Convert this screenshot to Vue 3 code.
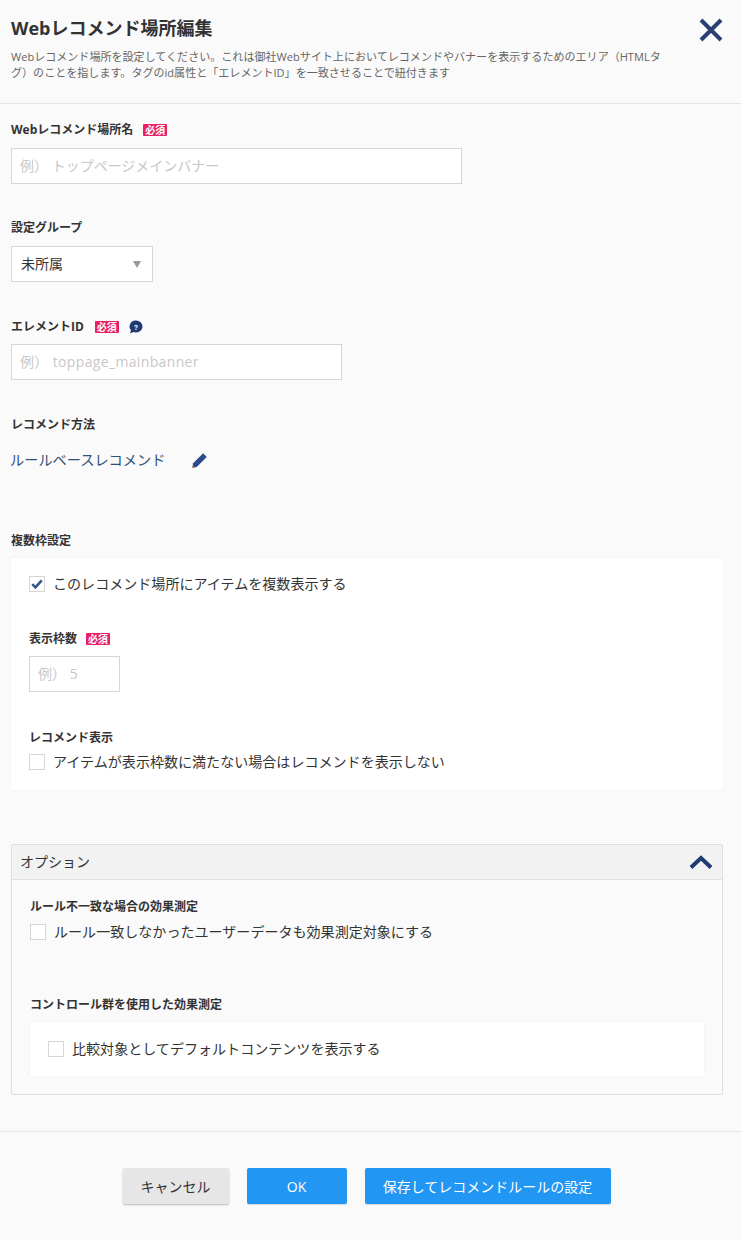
<script setup>
const badge = '必須'
</script>

<template>
  <div class="page">
    <header class="head">
      <div class="head-text">
        <h1 class="title">Webレコメンド場所編集</h1>
        <p class="desc">Webレコメンド場所を設定してください。これは御社Webサイト上においてレコメンドやバナーを表示するためのエリア（HTMLタグ）のことを指します。タグのid属性と「エレメントID」を一致させることで紐付きます</p>
      </div>
      <svg class="close" viewBox="0 0 24 24" width="24" height="24">
        <path d="M2 2 L22 22 M22 2 L2 22" stroke="#2a3f73" stroke-width="4" fill="none" />
      </svg>
    </header>

    <main class="body">
      <section class="field f1">
        <div class="label">Webレコメンド場所名<span class="req r1">{{ badge }}</span></div>
        <div class="input w451"><span class="ph">例） トップページメインバナー</span></div>
      </section>

      <section class="field f2">
        <div class="label">設定グループ</div>
        <div class="input select"><span>未所属</span><i class="tri"></i></div>
      </section>

      <section class="field f3">
        <div class="label">エレメントID<span class="req r2">{{ badge }}</span>
          <svg class="help" viewBox="0 0 16 16" width="16" height="16">
            <path d="M8 1.5a6.5 6 0 0 1 0 12c-1 0-1.9-.2-2.6-.5L2 14.5l1-3.2A6 6 0 0 1 8 1.5z" fill="#1f3a75" />
            <text x="8" y="10.6" text-anchor="middle" font-size="8" font-weight="700" fill="#fff" font-family="Roboto, sans-serif">?</text>
          </svg>
        </div>
        <div class="input w331 tight"><span class="ph wide">例） toppage_mainbanner</span></div>
      </section>

      <section class="field f4">
        <div class="label">レコメンド方法</div>
        <div class="method">
          <span>ルールベースレコメンド</span>
          <svg class="pencil" viewBox="0 0 16 16" width="17" height="17">
            <path d="M11.4 1.2 14.8 4.6 5.4 14 1.2 15 2 10.6z" fill="#2a4a8a" />
            <path d="M1.2 15 1.7 12.6 3.6 14.5z" fill="#d8843a" />
          </svg>
        </div>
      </section>

      <section class="field f5">
        <div class="label">複数枠設定</div>
        <div class="card">
          <label class="check">
            <span class="box">
              <svg viewBox="0 0 16 16" width="16" height="16"><path d="M2.6 8.2 6.2 11.8 13.4 3.8" stroke="#2f5a8c" stroke-width="3" fill="none" /></svg>
            </span>
            このレコメンド場所にアイテムを複数表示する
          </label>
          <div class="label sub1">表示枠数<span class="req">{{ badge }}</span></div>
          <div class="input w91 tight"><span class="ph">例） 5</span></div>
          <div class="label sub2">レコメンド表示</div>
          <label class="check c2"><span class="box"></span>アイテムが表示枠数に満たない場合はレコメンドを表示しない</label>
        </div>
      </section>

      <section class="accordion">
        <div class="acc-head">
          <span class="acc-title">オプション</span>
          <svg viewBox="0 0 24 14" width="24" height="14">
            <path d="M2 12.5 12 3 22 12.5" stroke="#203a72" stroke-width="4" fill="none" />
          </svg>
        </div>
        <div class="acc-body">
          <div class="label">ルール不一致な場合の効果測定</div>
          <label class="check a1"><span class="box"></span>ルール一致しなかったユーザーデータも効果測定対象にする</label>
          <div class="label a2">コントロール群を使用した効果測定</div>
          <div class="inner">
            <label class="check"><span class="box"></span>比較対象としてデフォルトコンテンツを表示する</label>
          </div>
        </div>
      </section>
    </main>

    <footer class="foot">
      <button class="btn cancel">キャンセル</button>
      <button class="btn ok">OK</button>
      <button class="btn save">保存してレコメンドルールの設定</button>
    </footer>
  </div>
</template>

<style>
html, body { margin: 0; background: #fafafa; }
</style>

<style scoped>
.page {
  width: 741px;
  height: 1240px;
  background: #fafafa;
  color: #333;
  font-family: "Open Sans", "Noto Sans CJK JP", sans-serif;
  overflow: hidden;
}
.head {
  display: flex;
  justify-content: space-between;
  padding: 16px 18px 0 11px;
  border-bottom: 1px solid #e4e4e4;
  height: 87px;
}
.head-text { width: 652px; }
.title { margin: 0; font-size: 18px; line-height: 24px; font-weight: 700; color: #333; }
.desc { margin: 9px 0 0; font-size: 11.05px; line-height: 16px; color: #666; }
.close { margin-top: 2px; }
.body { padding: 0 18px 0 11px; }
.label {
  display: flex;
  align-items: center;
  font-size: 12px;
  line-height: 18px;
  font-weight: 700;
  color: #333;
}
.req {
  margin-left: 9px;
  width: 24px;
  height: 12px;
  border-radius: 1px;
  background: #e91e63;
  color: #fff;
  font-size: 10px;
  line-height: 12px;
  text-align: center;
}
.r1 { margin-left: 10px; }
.r2 { margin-left: 11px; }
.help { margin-left: 9px; }
.input {
  box-sizing: border-box;
  height: 36px;
  margin-top: 9px;
  padding: 0 9px 2px 8px;
  display: flex;
  align-items: center;
  background: #fff;
  border: 1px solid #d6d6d6;
  font-size: 14px;
}
.tight { margin-top: 8px; }
.ph { color: #c8c8c8; white-space: pre; }
.wide { letter-spacing: .35px; }
.w451 { width: 451px; }
.w331 { width: 331px; }
.w91 { width: 91px; }
.select { width: 142px; justify-content: space-between; padding: 0 11px 2px 9px; color: #333; }
.tri {
  width: 0;
  height: 0;
  margin-top: 2px;
  border-left: 4px solid transparent;
  border-right: 4px solid transparent;
  border-top: 7px solid #999;
}
.f1 { padding-top: 17px; }
.f2 { padding-top: 35px; }
.f3 { padding-top: 36px; }
.f4 { padding-top: 36px; }
.f5 { padding-top: 62px; }
.method {
  display: flex;
  align-items: center;
  gap: 26px;
  margin-top: 16px;
  margin-left: -1px;
  font-size: 14.2px;
  line-height: 20px;
  color: #2f5078;
}
.card {
  margin-top: 8px;
  width: 712px;
  height: 232px;
  box-sizing: border-box;
  padding: 16px 18px 0;
  background: #fff;
  box-shadow: 0 0 2px rgba(0, 0, 0, .06);
}
.check {
  display: flex;
  align-items: center;
  gap: 8px;
  font-size: 14.05px;
  line-height: 20px;
  color: #333;
}
.box {
  box-sizing: border-box;
  width: 16px;
  height: 16px;
  flex: none;
  background: #fff;
  border: 1px solid #d6d6d6;
  display: flex;
  align-items: center;
  justify-content: center;
}
.c2 { margin-top: 5px; }
.sub1 { margin-top: 36px; }
.sub2 { margin-top: 37px; }
.accordion {
  margin-top: 54px;
  width: 712px;
  height: 251px;
  box-sizing: border-box;
  border: 1px solid #dedede;
  border-radius: 2px;
}
.acc-head {
  box-sizing: border-box;
  height: 35px;
  padding: 0 9px 0 8px;
  display: flex;
  justify-content: space-between;
  align-items: center;
  background: #f2f2f2;
  border-bottom: 1px solid #e2e2e2;
  font-size: 14px;
  color: #333;
}
.acc-title { margin-bottom: 3px; }
.acc-body { padding: 18px 18px 0; }
.a1 { margin-top: 6px; }
.a2 { margin-top: 54px; }
.inner {
  margin-top: 8px;
  height: 54px;
  box-sizing: border-box;
  padding: 0 18px;
  display: flex;
  align-items: center;
  background: #fff;
  box-shadow: 0 0 2px rgba(0, 0, 0, .06);
}
.foot {
  margin-top: 36px;
  border-top: 1px solid #e4e4e4;
  padding: 36px 8px 0 0;
  display: flex;
  justify-content: center;
  gap: 18px;
}
.btn {
  height: 36px;
  border: none;
  border-radius: 2px;
  font-family: inherit;
  font-size: 14px;
  padding: 0;
}
.cancel { width: 106px; background: #e6e6e6; color: #333; box-shadow: 0 1px 2px rgba(0, 0, 0, .25); }
.ok { width: 100px; background: #2196f3; color: #fff; box-shadow: 0 1px 1px rgba(0, 0, 0, .15); }
.save { width: 246px; background: #2196f3; color: #fff; box-shadow: 0 1px 1px rgba(0, 0, 0, .15); }
</style>
